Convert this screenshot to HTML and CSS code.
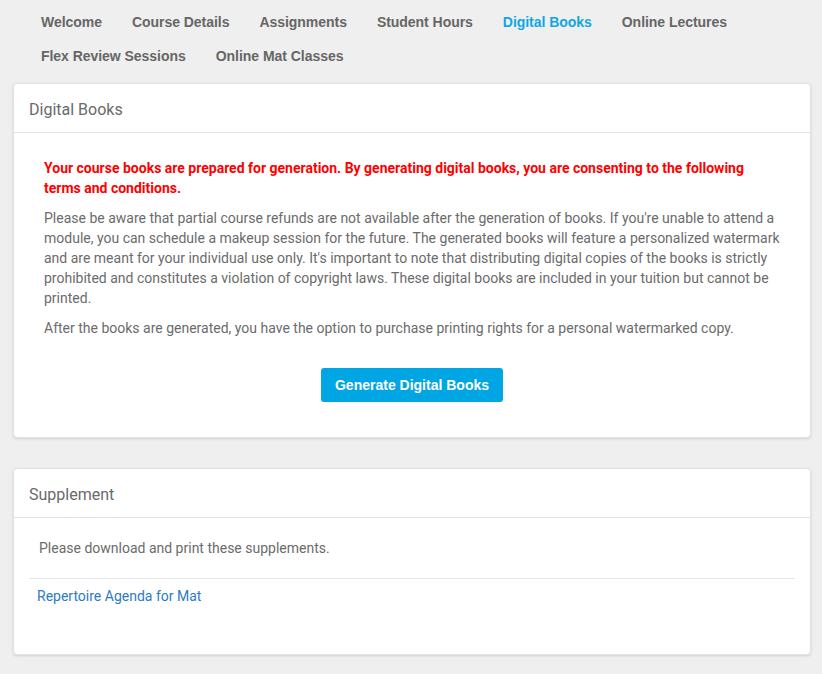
FILE: index.html
```html
<!DOCTYPE html>
<html lang="en">
<head>
<meta charset="utf-8">
<title>Digital Books</title>
<link rel="stylesheet" href="styles.css">
</head>
<body>
<nav class="tabs">
  <a class="tab" href="#">Welcome</a>
  <a class="tab" href="#">Course Details</a>
  <a class="tab" href="#">Assignments</a>
  <a class="tab" href="#">Student Hours</a>
  <a class="tab active" href="#">Digital Books</a>
  <a class="tab" href="#">Online Lectures</a>
  <a class="tab" href="#">Flex Review Sessions</a>
  <a class="tab" href="#">Online Mat Classes</a>
</nav>

<section class="card">
  <div class="card-header">Digital Books</div>
  <div class="card-body books-body">
    <p class="warning">Your course books are prepared for generation. By generating digital books, you are consenting to the following terms and conditions.</p>
    <p>Please be aware that partial course refunds are not available after the generation of books. If you're unable to attend a module, you can schedule a makeup session for the future. The generated books will feature a personalized watermark and are meant for your individual use only. It's important to note that distributing digital copies of the books is strictly prohibited and constitutes a violation of copyright laws. These digital books are included in your tuition but cannot be printed.</p>
    <p>After the books are generated, you have the option to purchase printing rights for a personal watermarked copy.</p>
    <div class="actions"><button class="btn" type="button">Generate Digital Books</button></div>
  </div>
</section>

<section class="card supplement">
  <div class="card-header">Supplement</div>
  <div class="card-body supp-body">
    <p class="supp-text">Please download and print these supplements.</p>
    <div class="supp-list">
      <a class="supp-link" href="#">Repertoire Agenda for Mat</a>
    </div>
  </div>
</section>
</body>
</html>
```

FILE: styles.css
```css
html, body {
  margin: 0;
  padding: 0;
  background: #efefef;
}
body {
  font-family: Roboto, "Liberation Sans", Arial, sans-serif;
  color: #666;
  padding: 5px 11px 19px 13px;
}
.tabs {
  display: flex;
  flex-wrap: wrap;
  padding-left: 13px;
  margin-bottom: 10px;
}
.tab {
  font-family: "Liberation Sans", Arial, Helvetica, sans-serif;
  font-weight: bold;
  font-size: 14px;
  letter-spacing: -0.04px;
  line-height: 34px;
  color: #666;
  text-decoration: none;
  padding: 0 15px;
}
.tab.active {
  color: #0ea7e4;
}
.card {
  background: #fff;
  border-radius: 4px;
  border: 1px solid #e2e2e2;
  box-shadow: 0 1px 3px rgba(0,0,0,0.12);
}
.card-header {
  font-size: 16px;
  color: #6a6a6a;
  line-height: 20px;
  padding: 16px 15px 12px 15px;
  border-bottom: 1px solid #e3e3e3;
}
.books-body {
  padding: 25px 30px 35px 30px;
}
.books-body p {
  margin: 0 0 10px 0;
  font-size: 14px;
  line-height: 20px;
  color: #6b6b6b;
}
.books-body p.warning {
  color: #ff0000;
  font-weight: bold;
}
.actions {
  display: flex;
  justify-content: center;
  padding-top: 20px;
}
.btn {
  font-family: "Liberation Sans", Arial, Helvetica, sans-serif;
  font-weight: bold;
  font-size: 14px;
  color: #fff;
  background: #00a5e3;
  border: none;
  border-radius: 3px;
  height: 34px;
  padding: 0 14px;
  cursor: pointer;
}
.supplement {
  margin-top: 30px;
}
.supp-body {
  padding: 20px 15px 48px 15px;
}
.supp-text {
  margin: 0;
  padding-left: 10px;
  font-size: 14px;
  line-height: 20px;
  color: #6b6b6b;
}
.supp-list {
  margin-top: 20px;
  border-top: 1px solid #e3e6ea;
  padding: 7px 8px 0 8px;
}
.supp-link {
  font-size: 14px;
  line-height: 20px;
  color: #2f7bbf;
  text-decoration: none;
}
```
